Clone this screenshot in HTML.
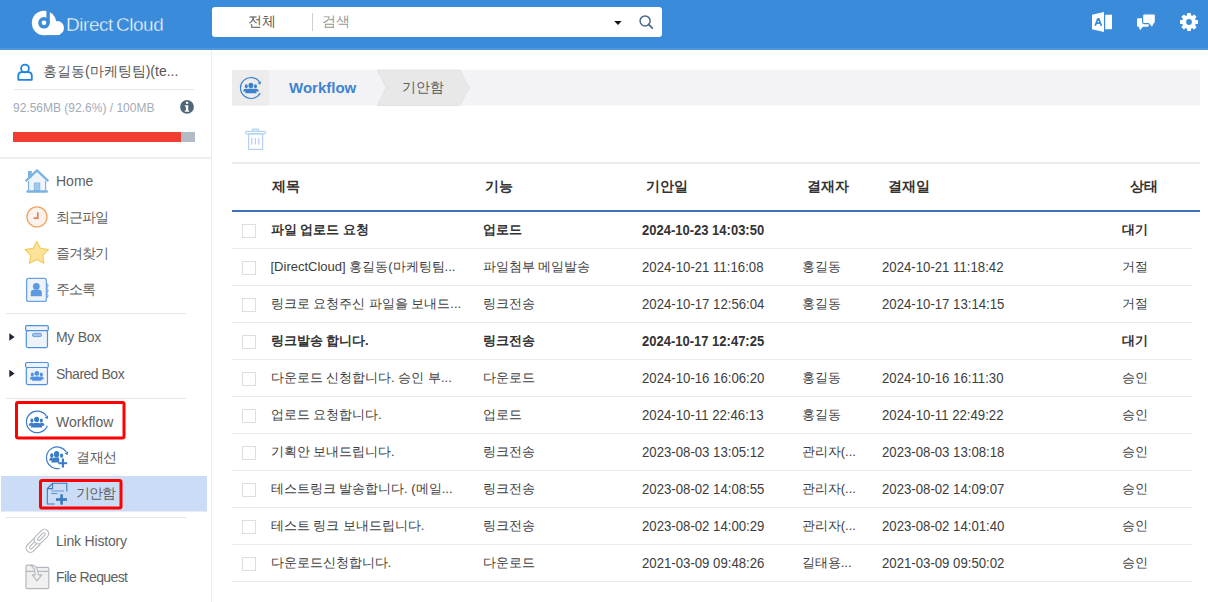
<!DOCTYPE html>
<html><head><meta charset="utf-8">
<style>
*{box-sizing:border-box;margin:0;padding:0}
html,body{width:1208px;height:602px;overflow:hidden;background:#fff}
body{font-family:"Liberation Sans",sans-serif;color:#555;position:relative}
.t{position:absolute;white-space:nowrap;line-height:1}
#ov{position:absolute;left:0;top:0}
.nav{font-size:14px;color:#5f5f5f}
.th{position:absolute;top:178px;font-size:14px;font-weight:bold;color:#333;line-height:16px;white-space:nowrap}
.row{position:absolute;left:232px;width:960px;height:37px;border-bottom:1px solid #eaebee}
.cell{position:absolute;top:0;line-height:35px;font-size:13px;color:#3d3d3d;white-space:nowrap}
.cell.dt{font-size:13.2px;transform:translateY(0.5px) scaleY(1.1)}
.b .cell{font-weight:bold;color:#333}
.b .cell.dt{font-size:13px}
.cb{position:absolute;left:10px;top:12px;width:14px;height:14px;border:1px solid #dedede;background:#fff}
</style></head>
<body>
<svg id="ov" width="1208" height="602" viewBox="0 0 1208 602">
<defs>
 <g id="ppl">
  <ellipse cx="0" cy="0" rx="2.5" ry="2.8"/>
  <path d="M-5.6,7.9 L-5.6,6.6 Q-5.2,3.9 -2.4,3.4 L2.4,3.4 Q5.2,3.9 5.6,6.6 L5.6,7.9 Z"/>
  <ellipse cx="-4.7" cy="0.9" rx="1.5" ry="2"/>
  <path d="M-7.8,6.2 L-7.8,5.3 Q-7.5,3.5 -5.3,3.3 L-3.5,3.3 L-4.3,6.2 Z"/>
  <ellipse cx="4.7" cy="0.9" rx="1.5" ry="2"/>
  <path d="M7.8,6.2 L7.8,5.3 Q7.5,3.5 5.3,3.3 L3.5,3.3 L4.3,6.2 Z"/>
 </g>
</defs>
 <!-- header -->
 <rect x="0" y="0" width="1208" height="48" fill="#3a8cdb"/>
 <rect x="0" y="48" width="1208" height="2" fill="#4c98de"/>
 <!-- logo -->
 <g fill="#fff">
  <circle cx="44" cy="23" r="12.2"/>
  <circle cx="57.2" cy="27.9" r="6.8"/>
  <rect x="44" y="27.9" width="13.2" height="7.2"/>
  <path d="M49.5,12.6 Q53.6,15.2 55.6,21.3 L60,24 L60,35 L49.5,35 Z"/>
 </g>
 <g fill="none" stroke="#3a8cdb">
  <circle cx="44" cy="22.8" r="4.1" stroke-width="3.4"/>
 </g>
 <rect x="46.4" y="9" width="3.4" height="14" fill="#3a8cdb"/>
 <!-- search -->
 <rect x="212" y="7" width="450" height="30" rx="3" fill="#fff"/>
 <rect x="312" y="13" width="1" height="18" fill="#cfcfcf"/>
 <path d="M614.2,21 L621.7,21 L618,24.9 Z" fill="#151515"/>
 <circle cx="645.1" cy="20.9" r="5" fill="none" stroke="#4a6a8e" stroke-width="1.5"/>
 <path d="M648.6,24.4 L652.3,28.1" stroke="#4a6a8e" stroke-width="1.8" stroke-linecap="round"/>
 <!-- office icon -->
 <path d="M1092,14.7 L1104,12 L1104,32 L1092,29.2 Z" fill="#fff"/>
 <rect x="1105.2" y="14.7" width="6.8" height="14.5" fill="#fff"/>
 <path d="M1095.2,25.7 L1097.8,18.9 L1098.8,18.9 L1101.4,25.7 M1096.4,23.2 L1100.2,23.2" fill="none" stroke="#3a8cdb" stroke-width="1.7" stroke-linejoin="round"/>
 <!-- chat icon -->
 <rect x="1137" y="18.2" width="11.8" height="8.6" rx="1.3" fill="#fff"/>
 <path d="M1138.6,26 L1143.5,26 L1140,30.2 Z" fill="#fff"/>
 <rect x="1142.6" y="13.8" width="12.8" height="9.8" rx="1.5" fill="#fff" stroke="#3a8cdb" stroke-width="1.2"/>
 <path d="M1148.8,23 L1153.8,23 L1152,26.8 Z" fill="#fff"/>
 <!-- gear -->
 <g transform="translate(1189,22)" fill="#fff">
  <circle r="6.9"/>
  <rect x="-1.9" y="-9" width="3.8" height="18" rx="0.6"/>
  <rect x="-1.9" y="-9" width="3.8" height="18" rx="0.6" transform="rotate(45)"/>
  <rect x="-1.9" y="-9" width="3.8" height="18" rx="0.6" transform="rotate(90)"/>
  <rect x="-1.9" y="-9" width="3.8" height="18" rx="0.6" transform="rotate(135)"/>
  <circle r="2.9" fill="#3a8cdb"/>
 </g>

 <!-- sidebar -->
 <rect x="211" y="50" width="1" height="552" fill="#ebedf0"/>
 <!-- user icon -->
 <circle cx="25" cy="68.5" r="3.9" fill="none" stroke="#1f84e2" stroke-width="1.8"/>
 <path d="M18.3,79.8 L18.3,75.6 Q18.3,72.4 21.6,72.2 L28.4,72.2 Q31.8,72.4 31.8,75.6 L31.8,79.8 Z" fill="none" stroke="#1f84e2" stroke-width="1.8" stroke-linejoin="round"/>
 <rect x="14" y="89" width="180" height="1" fill="#e4e7eb"/>
 <!-- info -->
 <circle cx="187" cy="106.9" r="6.9" fill="#4f6878"/>
 <rect x="186" y="101.8" width="2.2" height="2" fill="#fff"/>
 <path d="M184.8,105.2 L188.2,105.2 L188.2,110.6 L189.2,110.6 L189.2,111.8 L184.8,111.8 L184.8,110.6 L185.9,110.6 L185.9,106.4 L184.8,106.4 Z" fill="#fff"/>
 <!-- bar -->
 <rect x="13" y="132" width="168" height="10" fill="#f23d33"/>
 <rect x="181" y="132" width="14" height="10" fill="#b3bbc4"/>
 <rect x="0" y="157" width="211" height="2" fill="#eceef1"/>

 <!-- home -->
 <path d="M28.3,190.5 L28.3,180 L37,171.8 L45.7,180 L45.7,190.5 Z" fill="#eef4fa"/>
 <path d="M28.5,181 L28.5,190.5 M45.6,181 L45.6,190.5" stroke="#7ab3e0" stroke-width="1.2"/>
 <rect x="28" y="171" width="3.8" height="6.5" fill="#7ab3e0"/>
 <path d="M26.2,180.6 L37,170.4 L47.8,180.6" fill="none" stroke="#7ab3e0" stroke-width="2.2" stroke-linecap="round" stroke-linejoin="round"/>
 <rect x="34.3" y="183" width="5.5" height="7.6" fill="#9fcaee" stroke="#7ab3e0" stroke-width="0.8"/>
 <rect x="26.3" y="190.3" width="21.7" height="2.5" rx="1.2" fill="#7ab3e0"/>
 <!-- clock -->
 <circle cx="37" cy="216.9" r="10" fill="#faf2ee" stroke="#f2a45d" stroke-width="1.3"/>
 <path d="M37.8,212.3 L37.8,218.2 L33.6,218.2" fill="none" stroke="#e57f60" stroke-width="1.7"/>
 <!-- star -->
 <path d="M36.75,241.4 L40.4,248.2 L48.4,249.6 L42.8,255.3 L44,263.3 L36.75,259.6 L29.5,263.3 L30.7,255.3 L25.1,249.6 L33.1,248.2 Z" fill="#fde39a" stroke="#f1c95a" stroke-width="1.1" stroke-linejoin="round"/>
 <!-- address book -->
 <rect x="26.6" y="278.4" width="19.8" height="23" rx="2" fill="#eef3fa" stroke="#6aa2e3" stroke-width="1.3"/>
 <path d="M46.4,283.5 q1.6,0 1.6,2 q0,2 -1.6,2 M46.4,288.5 q1.6,0 1.6,2 q0,2 -1.6,2 M46.4,293.5 q1.6,0 1.6,2 q0,2 -1.6,2" fill="none" stroke="#6aa2e3" stroke-width="1.1"/>
 <circle cx="36.3" cy="286.4" r="3.4" fill="#5b9ae0"/>
 <path d="M30.8,296.3 L30.8,292.6 Q30.8,290 33.5,289.8 L39.1,289.8 Q41.8,290 41.8,292.6 L41.8,296.3 Z" fill="#5b9ae0"/>
 <rect x="6" y="313" width="180" height="1" fill="#e3e8ee"/>
 <!-- triangles -->
 <path d="M9.3,333.2 L14.6,337 L9.3,340.8 Z" fill="#222233"/>
 <path d="M9.3,369.7 L14.6,373.5 L9.3,377.3 Z" fill="#222233"/>
 <!-- my box -->
 <rect x="26.3" y="330.5" width="21.2" height="17.1" rx="1.5" fill="#eef3f9" stroke="#4f90e0" stroke-width="1.2"/>
 <rect x="25.6" y="325.6" width="22.7" height="5" rx="1.2" fill="#eef3f9" stroke="#4f90e0" stroke-width="1.2"/>
 <rect x="32.4" y="333.4" width="9.2" height="3.2" rx="1.6" fill="#a5c7ef" stroke="#5a98e0" stroke-width="0.9"/>
 <!-- shared box -->
 <rect x="26.3" y="367.5" width="21.2" height="17.1" rx="1.5" fill="#eef3f9" stroke="#4f90e0" stroke-width="1.2"/>
 <rect x="25.6" y="362.5" width="22.7" height="5" rx="1.2" fill="#eef3f9" stroke="#4f90e0" stroke-width="1.2"/>
 <g fill="#4f90e0">
  <circle cx="36.8" cy="373.4" r="2.4"/>
  <path d="M32.2,380.8 L32.2,379.4 Q32.4,376.8 35,376.5 L38.6,376.5 Q41.2,376.8 41.4,379.4 L41.4,380.8 Z"/>
  <ellipse cx="32.3" cy="374.6" rx="1.5" ry="2"/>
  <path d="M30,379.6 L30,378.4 Q30.3,376.8 32,376.6 L33.4,376.6 L33,379.6 Z"/>
  <ellipse cx="41.3" cy="374.6" rx="1.5" ry="2"/>
  <path d="M43.6,379.6 L43.6,378.4 Q43.3,376.8 41.6,376.6 L40.2,376.6 L40.6,379.6 Z"/>
 </g>
 <rect x="6" y="398" width="180" height="1" fill="#e3e8ee"/>
 <!-- workflow -->
 <path d="M47.3,425.8 A10.8,10.8 0 1 1 46.3,416" fill="none" stroke="#3a7cc8" stroke-width="1.2"/>
 <path d="M44.6,417.4 L48.2,415.2 L47.6,419.2 Z" fill="#3a7cc8"/>
 <use href="#ppl" fill="#3a7cc8" transform="translate(36.6,419.5)"/>
 <rect x="16.5" y="402.5" width="107.5" height="35.5" fill="none" stroke="#ff0000" stroke-width="3" rx="1.5"/>
 <!-- approval line -->
 <path d="M59.5,468.3 A10.8,10.8 0 1 1 66.3,452" fill="none" stroke="#3a7cc8" stroke-width="1.2"/>
 <path d="M64.6,453.4 L68.2,451.2 L67.6,455.2 Z" fill="#3a7cc8"/>
 <g fill="#3a7cc8">
  <ellipse cx="56.6" cy="454.2" rx="2.6" ry="3.2"/>
  <path d="M51.4,462.4 L51.4,460.6 Q51.8,457.8 54.4,457.4 L59.2,457.4 L59.2,462.4 Z"/>
  <ellipse cx="51.8" cy="455.6" rx="1.7" ry="2.3"/>
  <path d="M49.2,460.6 L49.2,459.6 Q49.5,458 51.4,457.8 L52.6,457.8 L52,460.6 Z"/>
  <ellipse cx="61.6" cy="455.6" rx="1.6" ry="2.2"/>
  <rect x="61.8" y="458.5" width="2.2" height="9"/>
  <rect x="58.3" y="462.2" width="8.8" height="2"/>
 </g>
 <!-- highlight -->
 <rect x="1" y="476" width="206" height="35.5" fill="#cbdcf6"/>
 <!-- draft icon -->
 <path d="M54.5,504 L47.3,504 L47.3,488.6 L52.6,483.3 L66.8,483.3 L66.8,491.5 M47.3,488.6 L52.6,488.6 L52.6,483.3" fill="none" stroke="#3c78bc" stroke-width="1.1"/>
 <rect x="51.3" y="490.3" width="12.7" height="1.3" fill="#7fa6d6"/>
 <rect x="51.3" y="493" width="5.8" height="1" fill="#5a8ccc"/>
 <rect x="60.3" y="494.3" width="2.6" height="10.4" fill="#3c78bc"/>
 <rect x="56" y="498.2" width="11" height="2.6" fill="#3c78bc"/>
 <rect x="40.5" y="480.5" width="80.5" height="27.5" fill="none" stroke="#ff0000" stroke-width="3" rx="1.5"/>
 <rect x="6" y="517" width="180" height="1" fill="#e3e8ee"/>
 <!-- link -->
 <g fill="#fff" stroke="#b5b9bf" stroke-width="1.1">
  <rect x="-4.3" y="-8.6" width="8.6" height="17.2" rx="4.3" transform="translate(33.4,545) rotate(45)"/>
  <rect x="-1.4" y="-4.8" width="2.8" height="9.6" rx="1.4" transform="translate(33.4,545) rotate(45)"/>
  <rect x="-4.3" y="-8.6" width="8.6" height="17.2" rx="4.3" transform="translate(41.4,536.6) rotate(45)"/>
  <rect x="-1.4" y="-4.8" width="2.8" height="9.6" rx="1.4" transform="translate(41.4,536.6) rotate(45)"/>
 </g>
 <!-- file request -->
 <path d="M26,571.3 L26,566.3 Q26,565.2 27.2,565.2 L32,565.2 L34.6,567.4 L47.6,567.4 Q48.8,567.4 48.8,568.6 L48.8,587.4 Q48.8,588.6 47.6,588.6 L27.2,588.6 Q26,588.6 26,587.4 Z" fill="#f0f0f0" stroke="#b3b8bf" stroke-width="1.2"/>
 <rect x="26" y="570.8" width="22.8" height="1.2" fill="#b3b8bf"/>
 <path d="M30.8,565.4 Q35,567.4 35.2,574.9 L32.3,574.9 L37,580.8 L41.8,574.9 L38.4,574.9 Q38,567 33.8,565.4 Z" fill="#f0f0f0" stroke="#b3b8bf" stroke-width="1.1" stroke-linejoin="round"/>

 <!-- breadcrumb -->
 <rect x="232" y="70" width="968" height="35.5" fill="#f3f3f5"/>
 <rect x="232" y="70" width="37" height="35.5" fill="#ececed"/>
 <path d="M377.4,70 L459.6,70 L469.3,87.75 L459.6,105.5 L377.4,105.5 L386.4,87.75 Z" fill="#e8e8e9" stroke="#e2e2e3" stroke-width="1"/>
 <path d="M260.2,93 A10.5,10.5 0 1 1 259.6,82" fill="none" stroke="#3a80cc" stroke-width="1.2"/>
 <path d="M257.6,83 L261,81.2 L260.4,84.8 Z" fill="#3a80cc"/>
 <use href="#ppl" fill="#3a80cc" transform="translate(250.9,85.4) scale(0.98)"/>
 <!-- trash -->
 <g fill="none" stroke="#b8d3f2" stroke-width="1.3">
  <rect x="245.6" y="131.4" width="20" height="2.4" rx="1.2"/>
  <rect x="252.6" y="129.2" width="5.8" height="2.2"/>
  <rect x="248.6" y="133.8" width="14" height="15.6"/>
  <path d="M251.8,138 L251.8,144.6 M255.4,138 L255.4,144.6 M258.8,138 L258.8,144.6"/>
 </g>
 <!-- table header lines -->
 <rect x="232" y="162" width="968" height="2" fill="#ebecef"/>
 <rect x="232" y="210" width="968" height="2" fill="#3b72b8"/>
</svg>

<!-- header texts -->
<div class="t" style="left:66px;top:15px;font-size:19px;color:#fff;letter-spacing:-0.45px;-webkit-text-stroke:0.45px #3a8cdb">Direct<span style="margin-left:3px">Cloud</span></div>
<div class="t" style="left:248px;top:14px;font-size:14px;color:#5a5a5a">전체</div>
<div class="t" style="left:322px;top:14px;font-size:14px;color:#999">검색</div>

<!-- sidebar texts -->
<div class="t" style="left:43px;top:64px;font-size:14px;color:#555">홍길동(마케팅팀)(te...</div>
<div class="t" style="left:13px;top:102px;font-size:12px;color:#a3abb6">92.56MB (92.6%) / 100MB</div>
<div class="t nav" style="left:56px;top:174px">Home</div>
<div class="t nav" style="left:56px;top:210px;letter-spacing:-1px">최근파일</div>
<div class="t nav" style="left:56px;top:246px;letter-spacing:-1px">즐겨찾기</div>
<div class="t nav" style="left:56px;top:282px;letter-spacing:-1px">주소록</div>
<div class="t nav" style="left:56px;top:330px;letter-spacing:-0.3px">My Box</div>
<div class="t nav" style="left:56px;top:367px;letter-spacing:-0.5px">Shared Box</div>
<div class="t nav" style="left:56px;top:415px">Workflow</div>
<div class="t nav" style="left:76px;top:450px;letter-spacing:-0.5px">결재선</div>
<div class="t nav" style="left:76px;top:486px;letter-spacing:-1px">기안함</div>
<div class="t nav" style="left:56px;top:534px;letter-spacing:-0.2px">Link History</div>
<div class="t nav" style="left:56px;top:570px;letter-spacing:-0.6px">File Request</div>

<!-- breadcrumb texts -->
<div class="t" style="left:289px;top:80px;font-size:15px;font-weight:bold;color:#3f83d0">Workflow</div>
<div class="t" style="left:402px;top:80px;font-size:14px;color:#5c5c5c">기안함</div>

<!-- table header -->
<div class="th" style="left:272px">제목</div>
<div class="th" style="left:485px">기능</div>
<div class="th" style="left:646px">기안일</div>
<div class="th" style="left:807px">결재자</div>
<div class="th" style="left:888px">결재일</div>
<div class="th" style="left:1130px">상태</div>

<div class="row b" style="top:212px"><div class="cb"></div><div class="cell c1" style="left:38.5px">파일 업로드 요청</div><div class="cell c2" style="left:250.5px">업로드</div><div class="cell dt" style="left:410.0px">2024-10-23 14:03:50</div><div class="cell c6" style="left:890.4px">대기</div></div>
<div class="row" style="top:249px"><div class="cb"></div><div class="cell c1" style="left:38.5px">[DirectCloud] 홍길동(마케팅팀...</div><div class="cell c2" style="left:250.5px">파일첨부 메일발송</div><div class="cell dt" style="left:410.0px">2024-10-21 11:16:08</div><div class="cell c4" style="left:569.7px">홍길동</div><div class="cell dt" style="left:650.0px">2024-10-21 11:18:42</div><div class="cell c6" style="left:890.4px">거절</div></div>
<div class="row" style="top:286px"><div class="cb"></div><div class="cell c1" style="left:38.5px">링크로 요청주신 파일을 보내드...</div><div class="cell c2" style="left:250.5px">링크전송</div><div class="cell dt" style="left:410.0px">2024-10-17 12:56:04</div><div class="cell c4" style="left:569.7px">홍길동</div><div class="cell dt" style="left:650.0px">2024-10-17 13:14:15</div><div class="cell c6" style="left:890.4px">거절</div></div>
<div class="row b" style="top:323px"><div class="cb"></div><div class="cell c1" style="left:38.5px">링크발송 합니다.</div><div class="cell c2" style="left:250.5px">링크전송</div><div class="cell dt" style="left:410.0px">2024-10-17 12:47:25</div><div class="cell c6" style="left:890.4px">대기</div></div>
<div class="row" style="top:360px"><div class="cb"></div><div class="cell c1" style="left:38.5px">다운로드 신청합니다. 승인 부...</div><div class="cell c2" style="left:250.5px">다운로드</div><div class="cell dt" style="left:410.0px">2024-10-16 16:06:20</div><div class="cell c4" style="left:569.7px">홍길동</div><div class="cell dt" style="left:650.0px">2024-10-16 16:11:30</div><div class="cell c6" style="left:890.4px">승인</div></div>
<div class="row" style="top:397px"><div class="cb"></div><div class="cell c1" style="left:38.5px">업로드 요청합니다.</div><div class="cell c2" style="left:250.5px">업로드</div><div class="cell dt" style="left:410.0px">2024-10-11 22:46:13</div><div class="cell c4" style="left:569.7px">홍길동</div><div class="cell dt" style="left:650.0px">2024-10-11 22:49:22</div><div class="cell c6" style="left:890.4px">승인</div></div>
<div class="row" style="top:434px"><div class="cb"></div><div class="cell c1" style="left:38.5px">기획안 보내드립니다.</div><div class="cell c2" style="left:250.5px">링크전송</div><div class="cell dt" style="left:410.0px">2023-08-03 13:05:12</div><div class="cell c4" style="left:569.7px">관리자(...</div><div class="cell dt" style="left:650.0px">2023-08-03 13:08:18</div><div class="cell c6" style="left:890.4px">승인</div></div>
<div class="row" style="top:471px"><div class="cb"></div><div class="cell c1" style="left:38.5px">테스트링크 발송합니다. (메일...</div><div class="cell c2" style="left:250.5px">링크전송</div><div class="cell dt" style="left:410.0px">2023-08-02 14:08:55</div><div class="cell c4" style="left:569.7px">관리자(...</div><div class="cell dt" style="left:650.0px">2023-08-02 14:09:07</div><div class="cell c6" style="left:890.4px">승인</div></div>
<div class="row" style="top:508px"><div class="cb"></div><div class="cell c1" style="left:38.5px">테스트 링크 보내드립니다.</div><div class="cell c2" style="left:250.5px">링크전송</div><div class="cell dt" style="left:410.0px">2023-08-02 14:00:29</div><div class="cell c4" style="left:569.7px">관리자(...</div><div class="cell dt" style="left:650.0px">2023-08-02 14:01:40</div><div class="cell c6" style="left:890.4px">승인</div></div>
<div class="row" style="top:545px"><div class="cb"></div><div class="cell c1" style="left:38.5px">다운로드신청합니다.</div><div class="cell c2" style="left:250.5px">다운로드</div><div class="cell dt" style="left:410.0px">2021-03-09 09:48:26</div><div class="cell c4" style="left:569.7px">길태용...</div><div class="cell dt" style="left:650.0px">2021-03-09 09:50:02</div><div class="cell c6" style="left:890.4px">승인</div></div>
</body></html>
